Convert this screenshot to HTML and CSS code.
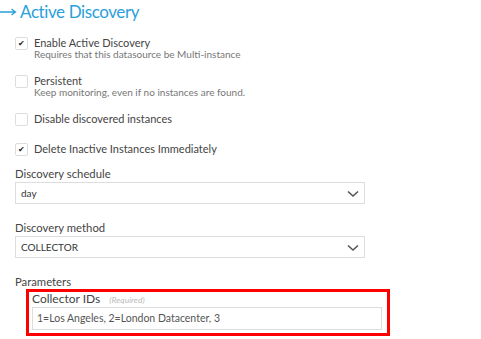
FILE: index.html
```html
<!DOCTYPE html>
<html lang="en">
<head>
    <meta charset="UTF-8">
    <title>Active Discovery</title>
    <link rel="stylesheet" href="styles.css">
</head>
<body>

    <!-- Section title -->
    <h2 class="section-title">
        <svg class="title-arrow" width="17" height="8" viewBox="0 0 17 8"><path d="M0 4H15M11.5 1L15.5 4L11.5 7" fill="none" stroke="#2a9fdb" stroke-width="1.3"/></svg>
        Active Discovery
    </h2>

    <div class="form">
        <!-- Checkboxes -->
        <div class="check-row">
            <span class="checkbox checked">&#10004;</span>
            <div>
                <div class="check-label">Enable Active Discovery</div>
                <div class="check-help">Requires that this datasource be Multi-instance</div>
            </div>
        </div>

        <div class="check-row">
            <span class="checkbox"></span>
            <div>
                <div class="check-label">Persistent</div>
                <div class="check-help">Keep monitoring, even if no instances are found.</div>
            </div>
        </div>

        <div class="check-row single">
            <span class="checkbox"></span>
            <div class="check-label">Disable discovered instances</div>
        </div>

        <div class="check-row single last">
            <span class="checkbox checked">&#10004;</span>
            <div class="check-label">Delete Inactive Instances Immediately</div>
        </div>

        <!-- Selects -->
        <div class="field">
            <div class="field-label">Discovery schedule</div>
            <div class="select">
                <span>day</span>
                <svg class="chevron" width="12" height="8" viewBox="0 0 12 8"><path d="M1 1.5L6 6L11 1.5" fill="none" stroke="#555" stroke-width="1.6"/></svg>
            </div>
        </div>

        <div class="field">
            <div class="field-label">Discovery method</div>
            <div class="select">
                <span>COLLECTOR</span>
                <svg class="chevron" width="12" height="8" viewBox="0 0 12 8"><path d="M1 1.5L6 6L11 1.5" fill="none" stroke="#555" stroke-width="1.6"/></svg>
            </div>
        </div>

        <!-- Parameters -->
        <div class="field">
            <div class="field-label params">Parameters</div>
            <div class="param-box">
                <div class="param-label">Collector IDs <em class="required">(Required)</em></div>
                <div class="text-input">1=Los Angeles, 2=London Datacenter, 3</div>
            </div>
        </div>
    </div>

</body>
</html>
```

FILE: styles.css
```css
/* Basic resets */
body {
    font-family: Lato, "Open Sans", sans-serif;
    margin: 0;
    padding: 0;
    background-color: #fff;
    color: #444;
}

/* Section title */
.section-title {
    display: flex;
    align-items: center;
    gap: 3px;
    margin: 0;
    height: 22px;
    font-size: 17px;
    font-weight: 400;
    letter-spacing: -0.4px;
    color: #2a9fdb;
}

.title-arrow {
    margin-top: 1px;
}

.form {
    padding: 15px 0 0 15px;
    width: 350px;
}

/* Checkbox rows */
.check-row {
    display: flex;
    gap: 6px;
    margin-bottom: 15px;
}

.check-row.single {
    margin-bottom: 17px;
}

.check-row.last {
    margin-bottom: 11px;
}

.checkbox {
    flex: none;
    width: 11px;
    height: 11px;
    border: 1px solid #ddd;
    border-radius: 2px;
    font-size: 8px;
    line-height: 11px;
    text-align: center;
    color: #222;
}

.check-label {
    font-size: 11px;
    line-height: 12px;
}

.check-help {
    font-size: 10px;
    line-height: 11px;
    color: #777;
}

/* Fields */
.field {
    margin-bottom: 17px;
}

.field-label {
    font-size: 11.3px;
    line-height: 13px;
    margin-bottom: 2px;
}

.field-label.params {
    margin-bottom: 1px;
}

.select {
    display: flex;
    align-items: center;
    justify-content: space-between;
    height: 20px;
    padding: 0 5px;
    border: 1px solid #ddd;
    font-size: 10px;
    color: #333;
}

.chevron {
    margin-top: 2px;
}

/* Parameters box */
.param-box {
    width: 350px;
    margin-left: 11px;
    padding: 1px 5px 3px 3px;
    border: 3px solid #f00;
}

.param-label {
    font-size: 12px;
    line-height: 12px;
    margin-bottom: 1px;
}

.required {
    font-size: 8.5px;
    color: #bbb;
    margin-left: 6px;
}

.text-input {
    box-sizing: border-box;
    height: 23px;
    line-height: 21px;
    padding: 0 4px;
    border: 1px solid #ddd;
    font-size: 10.5px;
    color: #555;
}
```
